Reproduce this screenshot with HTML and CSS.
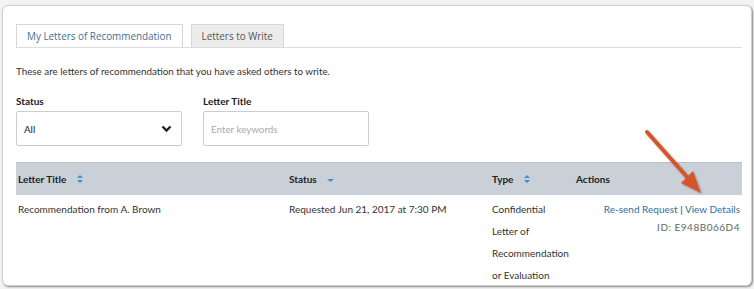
FILE: index.html
```html
<!DOCTYPE html>
<html>
<head>
    <title>Letters of Recommendation</title>
    <link rel="stylesheet" href="styles.css">
</head>
<body>
    <div class="panel">
        <div class="tabs">
            <div class="tab active">My Letters of Recommendation</div>
            <div class="tab">Letters to Write</div>
        </div>
        <p class="intro">These are letters of recommendation that you have asked others to write.</p>
        <div class="filters">
            <div class="filter">
                <label>Status</label>
                <div class="select">
                    <span>All</span>
                    <svg class="chevron" width="11" height="8" viewBox="0 0 11 8"><path d="M1.5 1.5 L5.5 5.5 L9.5 1.5" fill="none" stroke="#222" stroke-width="2.4"/></svg>
                </div>
            </div>
            <div class="filter">
                <label>Letter Title</label>
                <div class="input">Enter keywords</div>
            </div>
        </div>
        <table class="letters">
            <thead>
                <tr>
                    <th class="col-title">Letter Title <svg class="sort" width="8" height="10" viewBox="0 0 8 10"><path d="M4 1 L7 4 L1 4 Z M1 6 L7 6 L4 9 Z" fill="#4a8cc2"/></svg></th>
                    <th class="col-status">Status <svg class="sort" width="9" height="10" viewBox="0 0 9 10"><path d="M1 5 L8 5 L4.5 8 Z" fill="#4a8cc2"/></svg></th>
                    <th class="col-type">Type <svg class="sort" width="8" height="10" viewBox="0 0 8 10"><path d="M4 1 L7 4 L1 4 Z M1 6 L7 6 L4 9 Z" fill="#4a8cc2"/></svg></th>
                    <th class="col-actions">Actions</th>
                </tr>
            </thead>
            <tbody>
                <tr>
                    <td>Recommendation from A. Brown</td>
                    <td>Requested Jun 21, 2017 at 7:30 PM</td>
                    <td class="type">Confidential Letter of Recommendation or Evaluation</td>
                    <td class="actions">
                        <div class="links"><a href="#">Re-send Request</a> | <a href="#">View Details</a></div>
                        <div class="letter-id">ID: E948B066D4</div>
                    </td>
                </tr>
            </tbody>
        </table>
    </div>

    <svg class="callout" width="754" height="289" viewBox="0 0 754 289">
        <defs>
            <filter id="shade" x="-20%" y="-20%" width="140%" height="140%">
                <feDropShadow dx="1" dy="1" stdDeviation="1" flood-color="#000" flood-opacity="0.35"/>
            </filter>
        </defs>
        <g filter="url(#shade)">
            <line x1="647" y1="132" x2="688" y2="178" stroke="#d4552b" stroke-width="4" stroke-linecap="round"/>
            <path d="M701 193 L681 183 L693 171 Z" fill="#d4552b"/>
        </g>
    </svg>
</body>
</html>
```

FILE: styles.css
```css
body {
    margin: 0;
    padding: 5px 2px 3px 2px;
    background: #f3f3f3;
    font-family: Lato, "Open Sans", sans-serif;
    color: #333;
}
.panel {
    background: white;
    border: 1px solid #cfcfcf;
    border-radius: 6px;
    box-shadow: 1px 1px 2px rgba(0,0,0,0.45);
    padding: 18px 9px 0 13px;
    height: 281px;
    box-sizing: border-box;
    overflow: hidden;
}
.tabs {
    display: flex;
    gap: 8px;
    border-bottom: 1px solid #dcdcdc;
}
.tab {
    height: 22px;
    line-height: 22px;
    padding: 0 10px;
    border: 1px solid #d6d6d6;
    border-bottom: none;
    font-family: "Open Sans", sans-serif;
    font-size: 9.9px;
    color: #555;
    background: #ececec;
    white-space: nowrap;
}
.tab.active {
    background: white;
    color: #3f6f94;
}
.intro {
    margin: 15px 0 0 0;
    font-size: 9.8px;
    line-height: 16px;
}
.filters {
    display: flex;
    gap: 21px;
    margin-top: 15px;
}
.filter label {
    display: block;
    font-size: 10px;
    font-weight: bold;
    color: #222;
    line-height: 14px;
    margin-bottom: 3px;
}
.select, .input {
    width: 166px;
    height: 35px;
    box-sizing: border-box;
    border: 1px solid #cccccc;
    border-radius: 2px;
    display: flex;
    align-items: center;
    font-size: 9.8px;
}
.select {
    justify-content: space-between;
    padding: 0 9px 0 7px;
    color: #222;
}
.input {
    padding: 0 7px;
    color: #aaa;
}
.letters {
    margin-top: 16px;
    width: 726px;
    border-collapse: collapse;
    font-size: 10px;
}
.letters th {
    background: #c9d0d7;
    height: 32px;
    text-align: left;
    font-weight: bold;
    color: #222;
    padding: 0 2px;
    border-top: 1px solid #b9c1c8;
}
.sort {
    margin-left: 7px;
    vertical-align: -1px;
}
.col-title { width: 267px; }
.col-status { width: 199px; }
.col-type { width: 80px; }
.letters td {
    vertical-align: top;
    padding: 3px 2px 0 2px;
    line-height: 22px;
}
.type {
    width: 80px;
}
.actions {
    text-align: right;
}
.links {
    line-height: 22px;
}
.links a {
    color: #2f6fa0;
    text-decoration: none;
}
.letter-id {
    font-size: 10px;
    letter-spacing: 0.5px;
    color: #666;
    line-height: 14px;
}
.callout {
    position: absolute;
    left: 0;
    top: 0;
    pointer-events: none;
}
```
